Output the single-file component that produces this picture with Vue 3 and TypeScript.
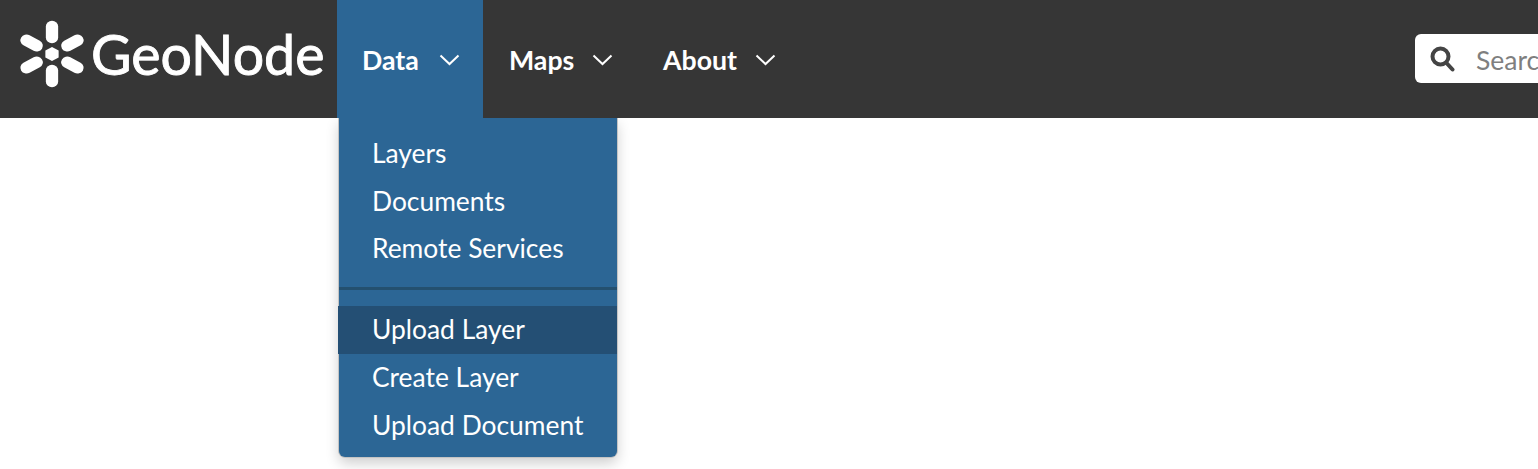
<script setup lang="ts">
const navItems = [
  { label: 'Data', active: true },
  { label: 'Maps', active: false },
  { label: 'About', active: false },
]
const menuTop = ['Layers', 'Documents', 'Remote Services']
const menuBottom = [
  { label: 'Upload Layer', hover: true },
  { label: 'Create Layer', hover: false },
  { label: 'Upload Document', hover: false },
]
const petals = [0, 60, 120, 180, 240, 300]
</script>

<template>
  <div class="page">
    <header class="navbar">
      <a class="brand">
        <svg class="mark" width="68" height="68" viewBox="-34 -34 68 68">
          <g transform="scale(1.07 1)">
            <polygon points="0,-7 6.2,-3.5 6.2,3.5 0,7 -6.2,3.5 -6.2,-3.5" fill="#fff" />
            <line
              v-for="a in petals"
              :key="a"
              x1="0"
              y1="-16.5"
              x2="0"
              y2="-27.5"
              stroke="#fff"
              stroke-width="11.5"
              stroke-linecap="round"
              :transform="`rotate(${a})`"
            />
          </g>
        </svg>
        <span class="brand-text">GeoNode</span>
      </a>
      <nav class="nav">
        <div v-for="item in navItems" :key="item.label" class="nav-item" :class="{ active: item.active }">
          <span>{{ item.label }}</span>
          <svg class="chevron" width="21" height="12" viewBox="0 0 21 12" fill="none">
            <path d="M1.5 1.5 L10.5 10 L19.5 1.5" stroke="#fff" stroke-width="2" />
          </svg>
          <ul v-if="item.active" class="dropdown">
            <li v-for="m in menuTop" :key="m">{{ m }}</li>
            <li class="divider"></li>
            <li v-for="m in menuBottom" :key="m.label" :class="{ hover: m.hover }">{{ m.label }}</li>
          </ul>
        </div>
      </nav>
      <div class="search">
        <svg class="lens" width="25" height="26" viewBox="0 0 25 26" fill="none">
          <circle cx="10.5" cy="10.5" r="8" stroke="#444" stroke-width="4" />
          <path d="M16.5 17 L22.5 23.5" stroke="#444" stroke-width="4" stroke-linecap="round" />
        </svg>
        <span class="placeholder">Search</span>
      </div>
    </header>
  </div>
</template>

<style>
html, body { margin: 0; background: #fff; overflow: hidden; }
</style>

<style scoped>
.page {
  width: 1538px;
  height: 469px;
  overflow: hidden;
  font-family: Lato, "Liberation Sans", sans-serif;
}
.navbar {
  display: flex;
  align-items: stretch;
  height: 118px;
  background: #363636;
}
.brand {
  display: flex;
  align-items: center;
  width: 337px;
  flex: none;
  padding: 0 0 11px 18px;
  box-sizing: border-box;
  color: #fff;
}
.mark { flex: none; }
.brand-text {
  font-size: 55.5px;
  line-height: 1;
  margin: 0 0 0 5px;
  font-weight: 400;
  -webkit-text-stroke: 0.9px #fff;
}
.nav {
  display: flex;
  flex: none;
}
.nav-item {
  position: relative;
  display: flex;
  align-items: center;
  gap: 20px;
  width: 146px;
  box-sizing: border-box;
  padding: 1px 0 0 25px;
  color: #fff;
  font-size: 26.7px;
  font-weight: 700;
}
.nav-item + .nav-item {
  width: 154px;
  padding-left: 26px;
  gap: 18px;
}
.nav-item.active { background: #2c6695; }
.chevron { flex: none; }
.dropdown {
  position: absolute;
  top: 118px;
  left: 2px;
  width: 278px;
  box-sizing: border-box;
  margin: 0;
  padding: 12px 0 8px;
  list-style: none;
  background: #2c6695;
  border-radius: 0 0 6px 6px;
  box-shadow:
    -1px 0 0 #c4c4c4,
    1px 0 0 #c4c4c4,
    0 1px 0 #c4c4c4,
    0 6px 14px rgba(0, 0, 0, 0.2);
  clip-path: inset(0 -30px -30px -30px);
  font-size: 26.4px;
  font-weight: 400;
  line-height: 47.7px;
}
.dropdown li { padding: 0 33px; white-space: nowrap; }
.dropdown li.divider {
  height: 3px;
  margin: 14px 0 16px;
  padding: 0;
  background: #24506f;
}
.dropdown li.hover {
  margin-left: -1px;
  padding-left: 34px;
  background: #244f74;
}
.search {
  display: flex;
  align-items: center;
  flex: none;
  align-self: flex-start;
  gap: 21px;
  margin-top: 34px;
  margin-left: auto;
  width: 123px;
  height: 49px;
  padding-left: 15px;
  box-sizing: border-box;
  background: #fff;
  border-radius: 6px 0 0 6px;
  overflow: hidden;
}
.lens { flex: none; }
.placeholder {
  flex: none;
  padding-top: 2px;
  font-size: 26.5px;
  color: #7f7f7f;
}
</style>
